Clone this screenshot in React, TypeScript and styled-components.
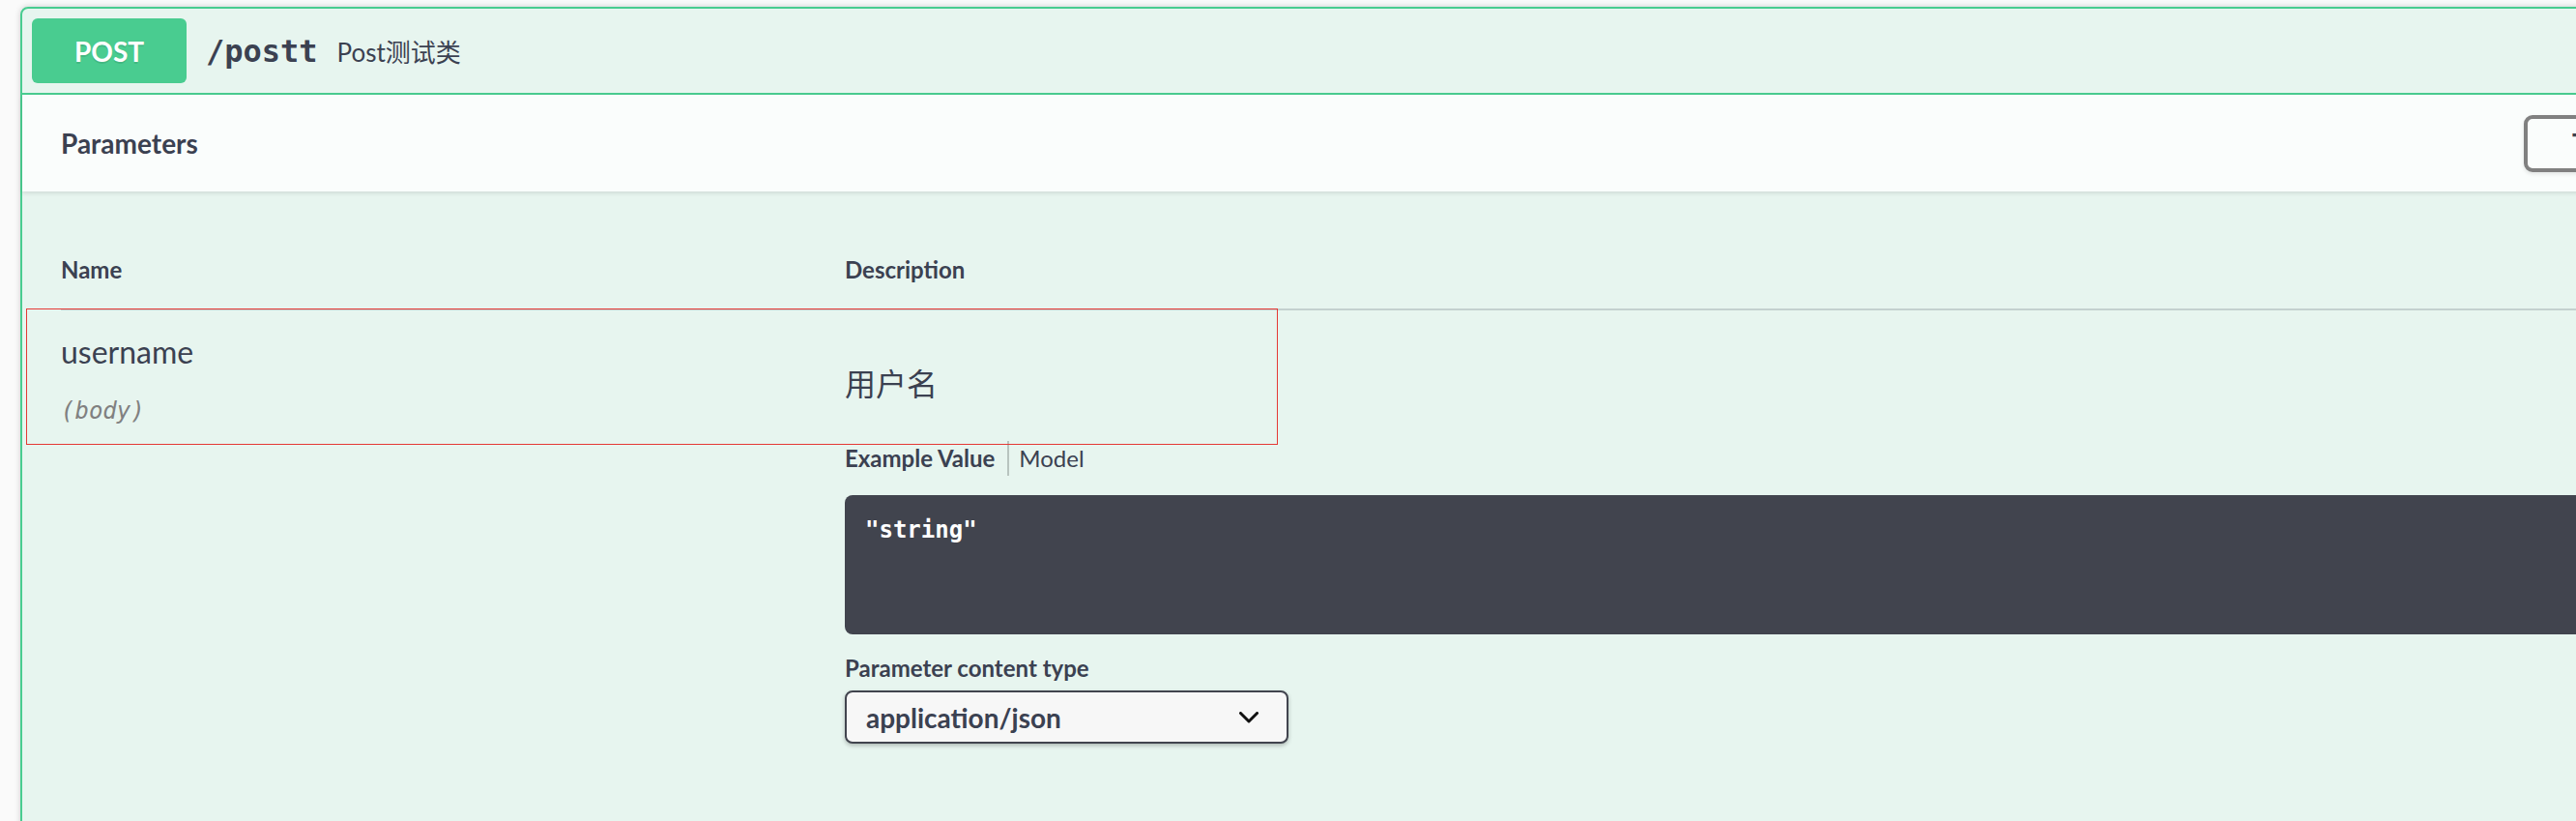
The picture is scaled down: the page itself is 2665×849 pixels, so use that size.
import React from "react";
import styled, { createGlobalStyle } from "styled-components";

const GlobalStyle = createGlobalStyle`
  html, body {
    margin: 0;
    padding: 0;
    background: #fafafa;
    overflow: hidden;
  }
  body {
    font-family: Lato, "Noto Sans CJK SC", sans-serif;
    color: #3b4151;
  }
  * { box-sizing: border-box; }
`;

const Page = styled.div`
  padding: 7px 0 0 21px;
  width: 2900px;
`;

const OpBlock = styled.div`
  width: 2862px;
  border: 2px solid #49cc90;
  border-radius: 8px;
  background: rgba(73, 204, 144, 0.1);
  box-shadow: 0 0 6px rgba(0, 0, 0, 0.19);
`;

const Summary = styled.div`
  display: flex;
  align-items: center;
  padding: 10px;
  border-bottom: 2px solid #49cc90;
`;

const MethodBadge = styled.span`
  display: flex;
  align-items: center;
  justify-content: center;
  width: 160px;
  height: 67px;
  border-radius: 6px;
  background: #49cc90;
  color: #fff;
  font-family: Lato, sans-serif;
  font-size: 28px;
  font-weight: 700;
  text-shadow: 0 2px 0 rgba(0, 0, 0, 0.1);
`;

const PathText = styled.span`
  padding: 0 20px;
  font-family: "DejaVu Sans Mono", monospace;
  font-size: 32px;
  font-weight: 600;
  color: #3b4151;
`;

const SummaryDescription = styled.span`
  font-family: Lato, "Noto Sans CJK SC", sans-serif;
  font-size: 26px;
  color: #3b4151;
`;

const SectionHeader = styled.div`
  display: flex;
  align-items: center;
  min-height: 100px;
  padding: 16px 40px;
  background: rgba(255, 255, 255, 0.8);
  box-shadow: 0 2px 4px rgba(0, 0, 0, 0.1);
`;

const SectionTitle = styled.h4`
  flex: 1;
  margin: 0;
  font-size: 28px;
  font-weight: 700;
  color: #3b4151;
`;

const TryButton = styled.button`
  width: 230px;
  height: 59px;
  padding: 0 0 0 46px;
  text-align: left;
  border: 4px solid #808080;
  border-radius: 9px;
  background: transparent;
  font-family: Lato, sans-serif;
  font-size: 28px;
  font-weight: 700;
  color: #3b4151;
  box-shadow: 0 2px 4px rgba(0, 0, 0, 0.1);
  white-space: nowrap;
`;

const TableContainer = styled.div`
  padding: 40px 40px 140px;
`;

const Table = styled.div`
  display: flex;
  flex-direction: column;
`;

const HeaderRow = styled.div`
  display: grid;
  grid-template-columns: 811px 1fr;
  border-bottom: 2px solid rgba(59, 65, 81, 0.2);
`;

const HeaderCell = styled.div`
  padding: 24px 0;
  font-size: 24px;
  line-height: 33px;
  font-weight: 700;
  color: #3b4151;
`;

const BodyRow = styled.div`
  position: relative;
  display: grid;
  grid-template-columns: 811px 1fr;
`;

const Highlight = styled.div`
  position: absolute;
  left: -36px;
  top: -2px;
  width: 1295px;
  height: 141px;
  border: 1.5px solid #e53935;
  pointer-events: none;
`;

const Cell = styled.div`
  padding: 20px 0;
`;

const ParamName = styled.div`
  font-size: 32px;
  line-height: 45px;
  color: #3b4151;
`;

const ParamIn = styled.div`
  margin-top: 23px;
  font-family: "DejaVu Sans Mono", monospace;
  font-size: 24px;
  line-height: 33px;
  font-style: italic;
  font-weight: 400;
  color: #808080;
`;

const Markdown = styled.p`
  margin: 33px 0 0;
  font-family: Lato, "Noto Sans CJK SC", sans-serif;
  font-size: 32px;
  line-height: 45px;
  color: #3b4151;
`;

const Tabs = styled.ul`
  display: flex;
  align-items: stretch;
  margin: 37px 0 0;
  padding: 0;
  list-style: none;
  height: 36px;
`;

const Tab = styled.li<{ $active?: boolean }>`
  font-size: 24px;
  line-height: 36px;
  font-weight: ${(p) => (p.$active ? 700 : 400)};
  color: #3b4151;
  padding: ${(p) => (p.$active ? "0 13px 0 0" : "0 0 0 10px")};
  border-right: ${(p) => (p.$active ? "2px solid rgba(0,0,0,0.2)" : "none")};
`;

const CodeBlock = styled.pre`
  margin: 20px 0 0;
  height: 144px;
  padding: 20px 21px;
  border-radius: 8px;
  background: #41444e;
  color: #fff;
  font-family: "DejaVu Sans Mono", monospace;
  font-size: 24px;
  line-height: 33px;
  font-weight: 600;
`;

const ContentTypeLabel = styled.div`
  margin-top: 18px;
  font-size: 24px;
  line-height: 33px;
  font-weight: 700;
  color: #3b4151;
`;

const SelectBox = styled.div`
  display: flex;
  align-items: center;
  justify-content: space-between;
  margin-top: 7px;
  width: 459px;
  height: 55px;
  padding: 0 29px 0 20px;
  border: 2px solid #41444e;
  border-radius: 8px;
  background: #f7f7f7;
  box-shadow: 0 2px 4px rgba(0, 0, 0, 0.25);
  font-size: 28px;
  font-weight: 700;
  color: #3b4151;
`;

const Chevron = () => (
  <svg width="20" height="12" viewBox="0 0 20 12" fill="none">
    <polyline
      points="1.5,1.5 10,10 18.5,1.5"
      stroke="#111"
      strokeWidth="3"
      strokeLinecap="round"
      strokeLinejoin="round"
    />
  </svg>
);

export default function App() {
  return (
    <>
      <GlobalStyle />
      <Page>
        <OpBlock>
          <Summary>
            <MethodBadge>POST</MethodBadge>
            <PathText>/postt</PathText>
            <SummaryDescription>Post测试类</SummaryDescription>
          </Summary>
          <SectionHeader>
            <SectionTitle>Parameters</SectionTitle>
            <TryButton>Try it out</TryButton>
          </SectionHeader>
          <TableContainer>
            <Table>
              <HeaderRow>
                <HeaderCell>Name</HeaderCell>
                <HeaderCell>Description</HeaderCell>
              </HeaderRow>
              <BodyRow>
                <Highlight />
                <Cell>
                  <ParamName>username</ParamName>
                  <ParamIn>(body)</ParamIn>
                </Cell>
                <Cell>
                  <Markdown>用户名</Markdown>
                  <Tabs>
                    <Tab $active>Example Value</Tab>
                    <Tab>Model</Tab>
                  </Tabs>
                  <CodeBlock>"string"</CodeBlock>
                  <ContentTypeLabel>Parameter content type</ContentTypeLabel>
                  <SelectBox>
                    <span>application/json</span>
                    <Chevron />
                  </SelectBox>
                </Cell>
              </BodyRow>
            </Table>
          </TableContainer>
        </OpBlock>
      </Page>
    </>
  );
}
